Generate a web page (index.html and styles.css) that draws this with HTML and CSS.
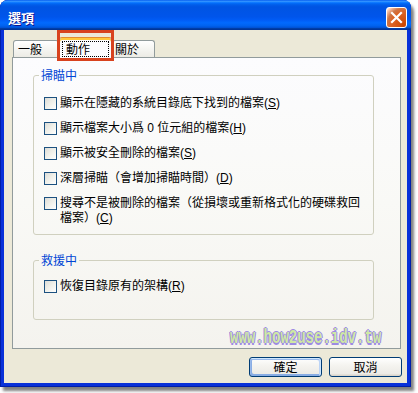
FILE: index.html
```html
<!DOCTYPE html>
<html lang="zh-Hant">
<head>
<meta charset="utf-8">
<title>選項</title>
<link rel="stylesheet" href="styles.css">
</head>
<body>
<div class="window">
  <div class="titlebar">
    <span class="title">選項</span>
    <button class="close" aria-label="關閉">
      <svg width="19" height="19" viewBox="0 0 19 19"><path d="M5 5 L14 14 M14 5 L5 14" stroke="#fff" stroke-width="2.2" stroke-linecap="square" fill="none"/></svg>
    </button>
  </div>
  <div class="client">
    <div class="tabs">
      <div class="tab tab-general">一般</div>
      <div class="tab tab-active"><span class="focus">動作</span></div>
      <div class="tab tab-about">關於</div>
    </div>
    <div class="panel">
      <fieldset class="group group-scan">
        <legend>掃瞄中</legend>
        <div class="rows">
          <label class="row"><span class="cb"></span><span class="lbl">顯示在隱藏的系統目錄底下找到的檔案(<u>S</u>)</span></label>
          <label class="row"><span class="cb"></span><span class="lbl">顯示檔案大小爲 0 位元組的檔案(<u>H</u>)</span></label>
          <label class="row"><span class="cb"></span><span class="lbl">顯示被安全刪除的檔案(<u>S</u>)</span></label>
          <label class="row"><span class="cb"></span><span class="lbl">深層掃瞄（會增加掃瞄時間）(<u>D</u>)</span></label>
          <label class="row"><span class="cb"></span><span class="lbl">搜尋不是被刪除的檔案（從損壞或重新格式化的硬碟救回<br>檔案）(<u>C</u>)</span></label>
        </div>
      </fieldset>
      <fieldset class="group group-rescue">
        <legend>救援中</legend>
        <div class="rows">
          <label class="row"><span class="cb"></span><span class="lbl">恢復目錄原有的架構(<u>R</u>)</span></label>
        </div>
      </fieldset>
    </div>
    <div class="buttons">
      <button class="btn btn-default">確定</button>
      <button class="btn">取消</button>
    </div>
  </div>
  <div class="highlight"></div>
  <div class="watermark">www.how2use.idv.tw</div>
</div>
</body>
</html>
```

FILE: styles.css
```css
html, body {
  margin: 0;
  padding: 0;
  background: #ffffff;
}

body {
  width: 418px;
  height: 393px;
  overflow: hidden;
  font-family: "Noto Sans CJK TC", "Noto Sans", sans-serif;
  font-size: 12px;
  color: #000;
}

.window {
  position: relative;
  width: 411px;
  height: 387px;
  box-sizing: border-box;
  display: flex;
  flex-direction: column;
  background: #0831d9;
  border-radius: 8px 8px 0 0;
  box-shadow: inset 1px 0 #001ea8, inset -1px 0 #001ea8, inset 0 -1px #001ea8, 3px 4px 3px rgba(0, 0, 0, 0.5);
}

.titlebar {
  height: 30px;
  flex: none;
  display: flex;
  align-items: flex-start;
  justify-content: space-between;
  padding: 0 4px 0 8px;
  border-radius: 8px 7px 0 0;
  background: linear-gradient(to bottom, #0058ee 0%, #3593ff 4%, #288eff 6%, #127dff 8%, #036ffc 10%, #0262ee 14%, #0057e5 20%, #0054e3 24%, #0055eb 56%, #005bf5 66%, #026afe 76%, #0062ef 86%, #0052d6 92%, #0040ab 94%, #003092 100%);
}

.title {
  margin-top: 10px;
  font-size: 13px;
  line-height: 16px;
  font-weight: bold;
  color: #fff;
  text-shadow: 1px 1px #0f1089;
}

.close {
  margin-top: 7px;
  width: 21px;
  height: 21px;
  padding: 0;
  box-sizing: border-box;
  border: 1px solid #fff;
  border-radius: 3px;
  display: flex;
  align-items: center;
  justify-content: center;
  background: radial-gradient(circle at 90% 90%, #cc4600 0%, #dc6527 55%, #cd7546 70%, #ffccb2 90%, #fff 100%);
}

.client {
  flex: 1;
  margin: 0 4px 4px;
  background: #ece9d8;
  padding: 7px 5px 6px 8px;
  display: flex;
  flex-direction: column;
}

.tabs {
  height: 20px;
  display: flex;
  align-items: flex-end;
  padding-left: 1px;
}

.tab {
  box-sizing: border-box;
  height: 17px;
  border: 1px solid #919b9c;
  border-bottom: none;
  border-radius: 3px 3px 0 0;
  background: linear-gradient(to bottom, #ffffff 0%, #f3f3ef 60%, #ecebe5 100%);
  line-height: 14px;
  padding-top: 1px;
}

.tab-general {
  width: 46px;
  padding-left: 4px;
}

.tab-about {
  width: 43px;
  padding-left: 2px;
}

.tab-active {
  position: relative;
  z-index: 1;
  width: 53px;
  height: 21px;
  margin-bottom: -1px;
  background: #fcfcfe;
  border-top: 1px solid #e68b2c;
  box-shadow: inset 0 2px #ffc83c;
  padding: 3px 0 0 2px;
}

.focus {
  display: block;
  width: 47px;
  height: 16px;
  box-sizing: border-box;
  border: 1px dotted #000;
  padding-left: 3px;
  line-height: 14px;
}

.panel {
  box-sizing: border-box;
  width: 389px;
  height: 292px;
  border: 1px solid #919b9c;
  background: linear-gradient(to bottom, #fcfcfe 0%, #f9f9f6 50%, #f4f3ee 100%);
  display: flex;
  flex-direction: column;
  align-items: flex-start;
}

.group {
  box-sizing: border-box;
  width: 341px;
  margin: 10px 0 0 20px;
  border: 1px solid #d0d0bf;
  border-radius: 3px;
  padding: 0 0 8px 5px;
  min-inline-size: 0;
}

.group legend {
  padding: 0 2px;
  color: #0046d5;
  font-size: 12px;
  line-height: 14px;
}

.group-rescue {
  margin-top: 18px;
  padding-bottom: 25px;
}

.rows {
  display: flex;
  flex-direction: column;
  gap: 10px;
  padding-top: 14px;
  margin-left: 5px;
}

.group-rescue .rows {
  padding-top: 12px;
}

.row {
  display: flex;
  align-items: flex-start;
  gap: 3px;
}

.cb {
  flex: none;
  width: 13px;
  height: 13px;
  box-sizing: border-box;
  margin-top: 1px;
  border: 1px solid #1c5180;
  background: linear-gradient(135deg, #dcdcd7 0%, #f0f0ea 50%, #ffffff 100%);
}

.lbl {
  font-family: "Liberation Sans", "Noto Sans CJK TC", sans-serif;
  line-height: 15px;
  white-space: nowrap;
}

.buttons {
  margin-top: 8px;
  display: flex;
  justify-content: flex-end;
  gap: 7px;
}

.btn {
  width: 73px;
  height: 20px;
  box-sizing: border-box;
  padding: 0;
  border: 1px solid #003c74;
  border-radius: 3px;
  font-family: "Noto Sans CJK TC", "Noto Sans", sans-serif;
  font-size: 12px;
  line-height: 14px;
  color: #000;
  background: linear-gradient(to bottom, #ffffff 0%, #f5f4f0 40%, #ecebe6 86%, #d6d0c5 100%);
}

.btn-default {
  box-shadow: inset -1px 1px #cee7ff, inset 1px 2px #98b8ea, inset -2px 2px #bcd4f6, inset 1px -1px #89ade4, inset 2px -2px #89ade4;
}

.highlight {
  position: absolute;
  left: 57px;
  top: 30px;
  width: 57px;
  height: 31px;
  box-sizing: border-box;
  border: 3px solid #d8421e;
  z-index: 2;
}

.watermark {
  position: absolute;
  left: 230px;
  top: 328px;
  font-family: "Liberation Mono", monospace;
  font-weight: bold;
  font-size: 14px;
  line-height: 14px;
  color: #cfe8a4;
  text-shadow: 1px 0 #9d8be3, -1px 0 #9d8be3, 0 1px #9d8be3, 0 -1px #9d8be3;
  transform: scaleY(1.4);
  transform-origin: 0 0;
  z-index: 3;
}
```
